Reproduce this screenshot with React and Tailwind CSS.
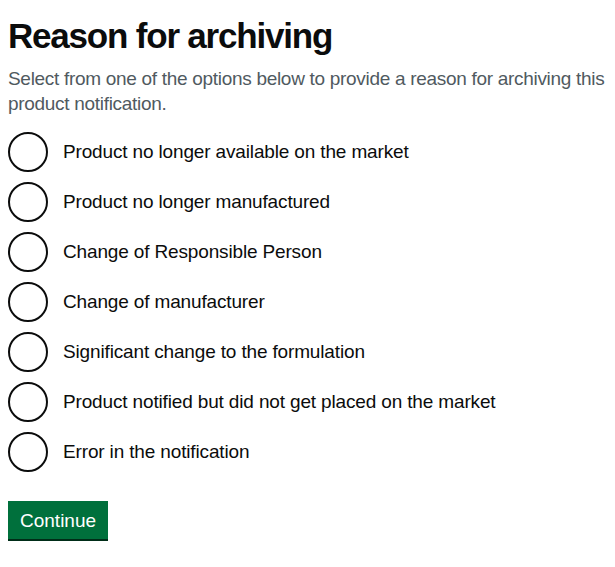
import React, { useState } from 'react';

const reasons = [
  'Product no longer available on the market',
  'Product no longer manufactured',
  'Change of Responsible Person',
  'Change of manufacturer',
  'Significant change to the formulation',
  'Product notified but did not get placed on the market',
  'Error in the notification',
];

const App = () => {
  const [selected, setSelected] = useState(null);

  return (
    <div className="min-h-screen bg-white px-2 pt-4 text-[#0b0c0c] font-['Liberation_Sans',Arial,sans-serif]">
      <form onSubmit={e => e.preventDefault()}>
        <fieldset>
          <legend>
            <h1 className="text-[35px] leading-[40px] font-bold tracking-[-1.2px] mb-[10px]">
              Reason for archiving
            </h1>
          </legend>
          <p className="text-[19px] leading-[25px] text-[#505a5f] tracking-[-0.3px]">
            Select from one of the options below to provide a reason for archiving this product notification.
          </p>

          {/* Radios */}
          <div className="mt-4 flex flex-col gap-[10px]">
            {reasons.map((r, i) => (
              <label key={r} className="flex items-start min-h-[40px] cursor-pointer">
                <input
                  type="radio"
                  name="reason"
                  className="sr-only"
                  checked={selected === i}
                  onChange={() => setSelected(i)}
                />
                <span className="w-10 h-10 shrink-0 rounded-full border-2 border-[#0b0c0c] bg-white flex items-center justify-center">
                  {selected === i && <span className="w-5 h-5 rounded-full bg-[#0b0c0c]" />}
                </span>
                <span className="px-[15px] pt-[7px] pb-[5px] text-[19px] leading-[25px] tracking-[-0.15px]">{r}</span>
              </label>
            ))}
          </div>
        </fieldset>

        <button
          type="submit"
          className="mt-[29px] bg-[#00703c] text-white text-[19px] leading-[19px] pt-2 pb-[7px] px-[10px] border-2 border-transparent shadow-[0_2px_0_#002d18]"
        >
          Continue
        </button>
      </form>
    </div>
  );
};

export default App;
